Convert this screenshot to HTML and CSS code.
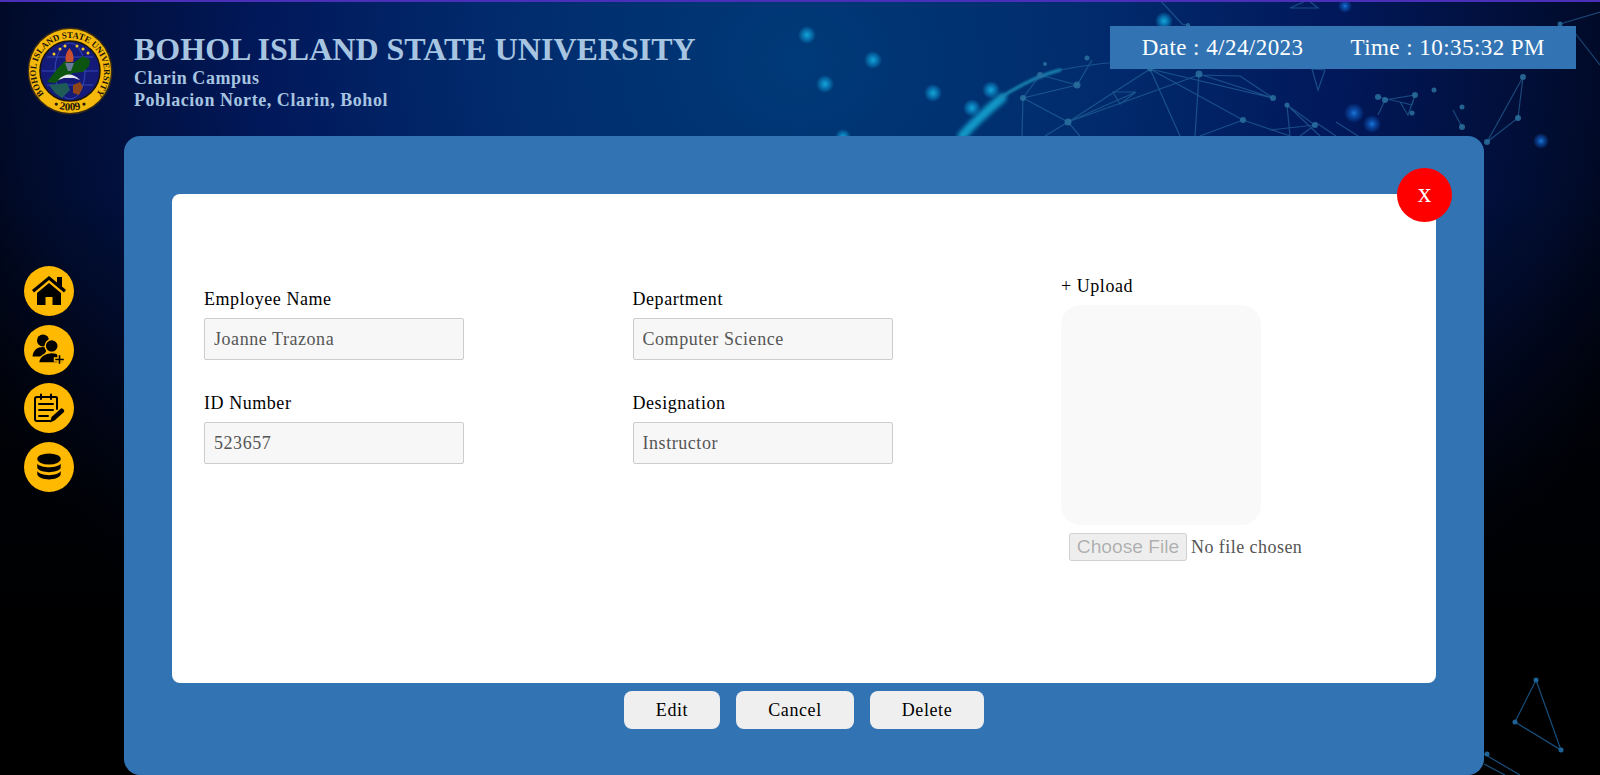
FILE: index.html
```html
<!DOCTYPE html>
<html>
  <head>
    <meta charset="utf-8" />
    <title>Employee Record</title>
    <link rel="stylesheet" href="styles.css">
  </head>

  <body>
    <!-- background network -->
    <svg class="bg-net" width="1600" height="775" viewBox="0 0 1600 775">
      <defs>
        <radialGradient id="glowCyan">
          <stop offset="0" stop-color="#12a8d8"/>
          <stop offset="0.4" stop-color="#0d8cc8" stop-opacity="0.8"/>
          <stop offset="1" stop-color="#0d8cc8" stop-opacity="0"/>
        </radialGradient>
        <radialGradient id="glowBlue">
          <stop offset="0" stop-color="#1a78d8"/>
          <stop offset="0.4" stop-color="#0f5cc0" stop-opacity="0.7"/>
          <stop offset="1" stop-color="#0f5cc0" stop-opacity="0"/>
        </radialGradient>
      </defs>
      <g fill="url(#glowCyan)">
        <circle cx="807" cy="35" r="9"/>
        <circle cx="873" cy="60" r="9"/>
        <circle cx="825" cy="84" r="9"/>
        <circle cx="933" cy="93" r="9"/>
        <circle cx="991" cy="90" r="9"/>
        <circle cx="972" cy="108" r="9"/>
        <circle cx="843" cy="137" r="8"/>
        <circle cx="1164" cy="21" r="9"/>
      </g>
      <g fill="url(#glowBlue)">
        <circle cx="1345" cy="6" r="7"/>
        <circle cx="1354" cy="113" r="10"/>
        <circle cx="1372" cy="124" r="9"/>
        <circle cx="1541" cy="141" r="8"/>
      </g>
      <path class="streak" d="M962 136 Q978 118 1002 98"/>
      <path class="streak-thin" d="M1000 98 Q1030 78 1060 70"/>
      <g class="net-line">
        <path d="M1060 70 Q1100 62 1150 60"/>
        <path d="M1023 98 L1040 75 M1023 98 L1077 85 L1092 60 M1040 75 L1077 85 M1023 98 L1068 122 L1080 136 M1023 98 L1022 136 M1068 122 L1150 69 M1068 122 L1199 75 M1068 122 L1045 136"/>
        <path d="M1068 122 L1136 92 L1120 104 L1113 92 L1136 92"/>
        <path d="M1150 69 L1180 136 M1150 69 L1243 120 L1290 136 M1199 74 L1195 136 M1199 74 L1273 98 L1150 69 M1199 75 L1240 76 L1273 98 M1243 120 L1200 136"/>
        <path d="M1290 136 L1287 105 L1315 125 L1300 136 M1287 105 L1320 136 M1315 125 L1270 130"/>
        <path d="M1315 122 L1336 136 M1336 122 L1358 136"/>
        <path d="M1312 69 L1318 90 L1325 70 Z"/>
        <path d="M1378 97 L1400 102 L1412 105 L1415 95 L1385 100 L1378 115 M1400 102 L1408 115 L1415 95"/>
        <path d="M1462 127 L1453 110 M1487 142 L1523 77 L1518 118 Z"/>
        <path d="M1160 0 L1182 24 L1190 26 M1290 8 L1318 8 L1308 0 Z M1560 24 L1600 12 M1575 33 L1600 65"/>
      </g>
      <g class="net-dot">
        <circle cx="1023" cy="98" r="3"/><circle cx="1040" cy="75" r="3"/><circle cx="1077" cy="85" r="3.5"/>
        <circle cx="1068" cy="122" r="3.5"/><circle cx="1150" cy="69" r="2.5"/><circle cx="1199" cy="74" r="3.5"/>
        <circle cx="1243" cy="120" r="3"/><circle cx="1273" cy="98" r="3"/><circle cx="1087" cy="58" r="2.5"/>
        <circle cx="1045" cy="64" r="2"/><circle cx="1188" cy="25" r="2"/><circle cx="1287" cy="105" r="2.5"/>
        <circle cx="1315" cy="125" r="3"/><circle cx="1378" cy="97" r="3"/><circle cx="1415" cy="95" r="3"/>
        <circle cx="1412" cy="113" r="2.5"/><circle cx="1385" cy="100" r="3"/><circle cx="1434" cy="90" r="2.5"/>
        <circle cx="1462" cy="127" r="3"/><circle cx="1462" cy="107" r="2.500"/>
        <circle cx="1487" cy="142" r="3"/><circle cx="1523" cy="77" r="3"/><circle cx="1518" cy="118" r="3"/>
        <circle cx="1560" cy="24" r="2.5"/>
      </g>
      <g class="net-low">
        <path d="M1536 680 L1515 722 L1561 750 Z M1484 754 L1520 775 M1484 764 L1505 775"/>
        <circle cx="1536" cy="680" r="2.500"/><circle cx="1515" cy="722" r="2.500"/><circle cx="1561" cy="750" r="2.500"/>
        <circle cx="1487" cy="754" r="2.500"/>
      </g>
    </svg>

    <div class="top-line"></div>

    <header class="site-header">
      <svg class="seal" width="86" height="88" viewBox="0 0 86 88">
        <defs>
          <path id="sealTop" d="M20 70 A34 34 0 1 1 66 70"/>
          <path id="sealBottom" d="M3.500 44 A39.500 39.500 0 0 0 82.500 44"/>
        </defs>
        <ellipse cx="43" cy="44" rx="42.500" ry="43.500" fill="#3a2c14"/>
        <ellipse cx="43" cy="44" rx="41" ry="42" fill="#f5b90c"/>
        <text class="seal-text"><textPath href="#sealTop" startOffset="50%" text-anchor="middle">BOHOL ISLAND STATE UNIVERSITY</textPath></text>
        <text class="seal-year"><textPath href="#sealBottom" startOffset="50%" text-anchor="middle">• 2009 •</textPath></text>
        <circle cx="43" cy="44" r="30" fill="#141a78" stroke="#1a1408" stroke-width="1.500"/>
        <g fill="none" stroke="#3c52c8" stroke-width="0.800">
          <ellipse cx="43" cy="44" rx="15" ry="28"/>
          <path d="M15 44 H71 M20 30 H66 M20 58 H66"/>
        </g>
        <path d="M20 55 L27 46 L30 42 L38 34 L46 36 L56 29 L63 33 L62 39 L56 45 L46 46 L34 52 L28 56 Z" fill="#0b5510"/>
        <path d="M31 53 Q42 42 53 53 L47 51 L37 51 Z" fill="#e4e4ee"/>
        <path d="M38 36 L47 36 L44 44 L41 44 Z" fill="#6a7a9c"/>
        <path d="M42.500 21 Q48 28 46 35 L39 35 Q37 28 42.500 21 Z" fill="#c8502c"/>
        <path d="M22 58 L40 56 L43 63 L35 71 L28 66 Z" fill="#1f5c58"/>
        <path d="M46 58 L53 55 L56 60 L52 68 L46 66 Z" fill="#8c4418"/>
        <g fill="#f5c820">
          <circle cx="27" cy="27" r="1.500"/><circle cx="33" cy="22" r="1.500"/><circle cx="38" cy="19" r="1.500"/>
          <circle cx="50" cy="19" r="1.500"/><circle cx="56" cy="22" r="1.500"/><circle cx="61" cy="26" r="1.500"/>
        </g>
      </svg>
      <div class="school-name">
        <h1>BOHOL ISLAND STATE UNIVERSITY</h1>
        <p>Clarin Campus</p>
        <p>Poblacion Norte, Clarin, Bohol</p>
      </div>
      <div class="clock">
        <span>Date : 4/24/2023</span>
        <span>Time : 10:35:32 PM</span>
      </div>
    </header>

    <div class="main">
      <nav class="side-nav">
        <a class="nav-btn">
          <svg width="36" height="36" viewBox="0 0 36 36">
            <path d="M18 3 L26 9.500 V4 H31 V13.500 L35 17 L33 19.500 L18 7 L3 19.500 L1 17 Z"/>
            <path d="M18 10 L30 20 V32 H21.500 V24 H14.500 V32 H6 V20 Z"/>
          </svg>
        </a>
        <a class="nav-btn">
          <svg width="36" height="36" viewBox="0 0 36 36">
            <circle cx="12" cy="8.500" r="6"/>
            <path d="M1.500 24.500 C2 18 6.500 15 12 15 L17 16 L12 24.500 Z"/>
            <g class="icon-cut">
              <circle cx="20.700" cy="14" r="6.500"/>
              <path d="M7.500 31 C8 24.500 14 20.500 20.700 20.500 C26 20.500 31 23 32.500 31 Z"/>
              <path d="M27 22.500 H30 V26 H33.500 V29 H30 V32.500 H27 V29 H23.500 V26 H27 Z"/>
            </g>
          </svg>
        </a>
        <a class="nav-btn">
          <svg width="36" height="36" viewBox="0 0 36 36">
            <path class="icon-line" d="M6 7 H25 Q26 7 26 8 V19 M19 31 H6 Q4 31 4 29 V9 Q4 7 6 7 M10 4.500 V9 M20 4.500 V9 M8 14 H22 M8 20 H22 M8 26 H17"/>
            <path d="M19 32.500 L20.500 27 L30 18.500 Q31 18 32 19 L33 20 Q33.500 21 33 22 L23.500 30.500 Z"/>
          </svg>
        </a>
        <a class="nav-btn">
          <svg width="36" height="36" viewBox="0 0 36 36">
            <ellipse cx="18" cy="10" rx="11.700" ry="5.500"/>
            <path d="M6.300 14.500 C9 19.500 27 19.500 29.700 14.500 V19 C27 24.500 9 24.500 6.300 19 Z"/>
            <path d="M6.300 22 C9 27.500 27 27.500 29.700 22 V25.500 C27 32 9 32 6.300 25.500 Z"/>
          </svg>
        </a>
      </nav>

      <section class="panel">
        <button class="close-btn">x</button>
        <div class="card">
          <div class="form-col">
            <div class="field">
              <label>Employee Name</label>
              <input type="text" value="Joanne Trazona" disabled>
            </div>
            <div class="field">
              <label>ID Number</label>
              <input type="text" value="523657" disabled>
            </div>
          </div>
          <div class="form-col">
            <div class="field">
              <label>Department</label>
              <input type="text" value="Computer Science" disabled>
            </div>
            <div class="field">
              <label>Designation</label>
              <input type="text" value="Instructor" disabled>
            </div>
          </div>
          <div class="upload-col">
            <label>+ Upload</label>
            <div class="photo-box"></div>
            <input class="file-input" type="file" disabled>
          </div>
        </div>
        <div class="actions">
          <button class="action-btn btn-edit">Edit</button>
          <button class="action-btn btn-cancel">Cancel</button>
          <button class="action-btn btn-delete">Delete</button>
        </div>
      </section>
    </div>
  </body>
</html>
```

FILE: styles.css
```css
* {
  box-sizing: border-box;
}

body {
  margin: 0;
  width: 1600px;
  height: 775px;
  overflow: hidden;
  position: relative;
  font-family: "Liberation Serif", "Times New Roman", serif;
  background-color: #000;
  background-image:
    linear-gradient(to bottom, rgba(0, 0, 0, 0) 25%, rgba(0, 0, 0, 0.45) 55%, #000 85%),
    radial-gradient(ellipse 900px 800px at 800px 60px, #003a78 0%, #012a6c 35%, #01185a 60%, #010c30 85%, #00030c 100%);
}

.bg-net {
  position: absolute;
  top: 0;
  left: 0;
}

.streak {
  fill: none;
  stroke: #129ac8;
  stroke-width: 9;
  stroke-linecap: round;
  filter: blur(2px);
}

.streak-thin {
  fill: none;
  stroke: #1a86b4;
  stroke-width: 3;
  stroke-linecap: round;
  filter: blur(1px);
}

.net-line {
  fill: none;
  stroke: #2a6ea4;
  stroke-width: 1.2;
  opacity: 0.6;
}

.net-dot {
  fill: #2a719f;
  opacity: 0.85;
}

.net-low {
  fill: #1f6396;
  stroke: none;
}

.net-low path {
  fill: none;
  stroke: #17507f;
  stroke-width: 1.2;
}

.top-line {
  position: relative;
  height: 2px;
  background-color: #4a30b8;
}

/* header */
.site-header {
  position: relative;
  display: flex;
  height: 134px;
  padding: 24px 24px 0 27px;
}

.seal {
  flex: none;
  margin-top: 1px;
}

.seal-text {
  font-family: "Liberation Serif", serif;
  font-weight: bold;
  font-size: 8.8px;
  fill: #1c1408;
}

.seal-year {
  font-family: "Liberation Serif", serif;
  font-weight: bold;
  font-size: 11px;
  fill: #1c1408;
}

.school-name {
  margin-left: 21px;
  color: #a7c5e0;
  font-weight: bold;
}

.school-name h1 {
  margin: 5px 0 0;
  font-size: 32px;
  line-height: 36px;
  font-weight: bold;
}

.school-name p {
  margin: 0;
  font-size: 18px;
  line-height: 22px;
  letter-spacing: 0.55px;
}

.clock {
  display: flex;
  gap: 47px;
  align-items: center;
  height: 43px;
  margin-left: auto;
  padding: 0 31px 0 32px;
  background-color: #3274b3;
  color: #fff;
  font-size: 23px;
  letter-spacing: 0.45px;
}

/* sidebar + panel */
.main {
  position: relative;
  display: flex;
}

.side-nav {
  display: flex;
  flex-direction: column;
  width: 124px;
  padding: 130px 0 0 24px;
  gap: 8.5px;
}

.nav-btn {
  display: flex;
  justify-content: center;
  align-items: center;
  width: 50px;
  height: 50px;
  border-radius: 50%;
  background-color: #ffb900;
}

.nav-btn svg {
  fill: #000;
}

.icon-cut {
  stroke: #ffb900;
  stroke-width: 1.4;
}

.icon-line {
  fill: none;
  stroke: #000;
  stroke-width: 2;
  stroke-linecap: round;
}

.panel {
  position: relative;
  width: 1360px;
  height: 639px;
  padding: 58px 48px 0;
  background-color: #3274b3;
  border-radius: 16px;
}

.close-btn {
  position: absolute;
  top: 32px;
  right: 32px;
  width: 55px;
  height: 54px;
  padding: 0 0 4px;
  border: none;
  border-radius: 50%;
  background-color: #f00;
  color: #fff;
  font-family: "Liberation Serif", serif;
  font-size: 27px;
  line-height: 1;
}

.card {
  display: flex;
  height: 489px;
  padding: 82px 0 0 32px;
  background-color: #fff;
  border-radius: 8px;
}

.form-col {
  display: flex;
  flex-direction: column;
  gap: 33px;
  width: 428.5px;
  padding-top: 13px;
}

.field label {
  display: block;
  margin-bottom: 8px;
  font-size: 18px;
  line-height: 21px;
  letter-spacing: 0.55px;
  color: #000;
}

.field input {
  display: block;
  width: 260px;
  height: 42px;
  padding: 0 9px;
  background-color: #f7f7f7;
  border: 1px solid #ccc;
  border-radius: 2px;
  font-family: "Liberation Serif", serif;
  font-size: 18px;
  letter-spacing: 0.55px;
  color: #555;
}

.upload-col label {
  display: block;
  font-size: 18px;
  line-height: 21px;
  letter-spacing: 0.55px;
  color: #000;
}

.photo-box {
  width: 200px;
  height: 220px;
  margin: 8px 0;
  background-color: #f9f9f9;
  border-radius: 20px;
}

.file-input {
  display: block;
  margin-left: 8px;
  font-family: "Liberation Serif", serif;
  font-size: 18px;
  letter-spacing: 0.45px;
  color: #555;
}

.file-input::file-selector-button {
  width: 118px;
  height: 28px;
  margin-right: 4px;
  padding: 0;
  font-family: "Liberation Sans", sans-serif;
  font-size: 19.2px;
  letter-spacing: 0;
}

.actions {
  display: flex;
  justify-content: center;
  gap: 16px;
  margin-top: 8px;
}

.action-btn {
  height: 38px;
  background-color: #efefef;
  border: none;
  border-radius: 8px;
  font-family: "Liberation Serif", serif;
  font-size: 18px;
  letter-spacing: 0.6px;
  color: #000;
}

.btn-edit {
  width: 96px;
}

.btn-cancel {
  width: 118px;
}

.btn-delete {
  width: 114px;
}
```
